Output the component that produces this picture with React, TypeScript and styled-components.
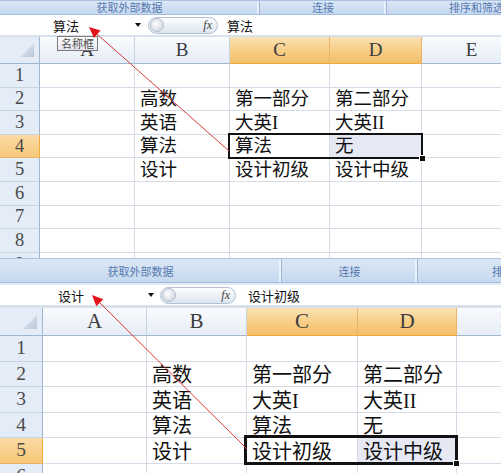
import { Fragment } from "react";
import styled, { createGlobalStyle } from "styled-components";

const GlobalStyle = createGlobalStyle`
  html, body {
    margin: 0;
    padding: 0;
    background: #ffffff;
  }
  body {
    font-family: "Liberation Serif", "Noto Sans CJK SC", serif;
  }
`;

type RibbonGroup = { label: string; width: number };
type Pointer = { tip: [number, number]; tail: [number, number] };

type SheetSpec = {
    height: number;
    ribbonH: number;
    ribbonAlign: "flex-end" | "center";
    groups: RibbonGroup[];
    barTop: number;
    barBottom: number;
    nameW: number;
    namePad: number;
    nameText: string;
    pillW: number;
    pillGap: number;
    formulaPad: number;
    formula: string;
    cols: number[];
    headerH: number;
    rowH: number;
    rowCount: number;
    cellFont: number;
    headFont: number;
    numFont: number;
    cellShift: number;
    activeRow: number;
    frame: number;
    pointer: Pointer;
    tooltip?: boolean;
};

const letters = ["A", "B", "C", "D", "E"];

const cells: Record<number, string[]> = {
    2: ["", "高数", "第一部分", "第二部分", ""],
    3: ["", "英语", "大英I", "大英II", ""],
    4: ["", "算法", "算法", "无", ""],
    5: ["", "设计", "设计初级", "设计中级", ""],
};

const sheets: SheetSpec[] = [
    {
        height: 258,
        ribbonH: 15,
        ribbonAlign: "flex-end",
        groups: [
            {label: "获取外部数据", width: 260},
            {label: "连接", width: 127},
            {label: "排序和筛选", width: 180},
        ],
        barTop: 0,
        barBottom: 2,
        nameW: 145,
        namePad: 53,
        nameText: "算法",
        pillW: 70,
        pillGap: 3,
        formulaPad: 9,
        formula: "算法",
        cols: [40, 95, 95, 100, 92, 100],
        headerH: 27,
        rowH: 23.6,
        rowCount: 9,
        cellFont: 18.5,
        headFont: 19,
        numFont: 18.5,
        cellShift: 1,
        activeRow: 4,
        frame: 2,
        pointer: {tip: [89, 27], tail: [229, 151]},
        tooltip: true,
    },
    {
        height: 215,
        ribbonH: 25,
        ribbonAlign: "center",
        groups: [
            {label: "获取外部数据", width: 282},
            {label: "连接", width: 136},
            {label: "排序和筛选", width: 204},
        ],
        barTop: 2,
        barBottom: 3,
        nameW: 158,
        namePad: 58,
        nameText: "设计",
        pillW: 76,
        pillGap: 2,
        formulaPad: 12,
        formula: "设计初级",
        cols: [43, 104, 100, 111, 99, 100],
        headerH: 28,
        rowH: 25.5,
        rowCount: 6,
        cellFont: 20,
        headFont: 21,
        numFont: 19.5,
        cellShift: 3,
        activeRow: 5,
        frame: 3,
        pointer: {tip: [92, 37], tail: [247, 191]},
    },
];

const PointerArrow = ({tip, tail}: Pointer) => {
    const [tx, ty] = tip;
    const [sx, sy] = tail;
    const len = Math.hypot(tx - sx, ty - sy);
    const ux = (tx - sx) / len;
    const uy = (ty - sy) / len;
    const bx = tx - ux * 11;
    const by = ty - uy * 11;
    const px = -uy * 5;
    const py = ux * 5;

    return (
        <Overlay>
            <line x1={sx} y1={sy} x2={bx} y2={by} stroke="#d63a3a" strokeWidth={1}/>
            <polygon points={`${tx},${ty} ${bx + px},${by + py} ${bx - px},${by - py}`} fill="#e3141c"/>
        </Overlay>
    );
};

const Sheet = ({spec}: { spec: SheetSpec }) => {
    const rows = Array.from({length: spec.rowCount}, (_, i) => i + 1);

    return (
        <Panel $h={spec.height}>
            <Ribbon $h={spec.ribbonH}>
                {spec.groups.map((g) => (
                    <Group key={g.label} $w={g.width} $align={spec.ribbonAlign}>{g.label}</Group>
                ))}
            </Ribbon>

            <Bar $top={spec.barTop} $bottom={spec.barBottom}>
                <NameBox $w={spec.nameW} $pad={spec.namePad}>
                    {spec.nameText}
                    <Drop/>
                </NameBox>
                <Pill $w={spec.pillW} $gap={spec.pillGap}>
                    <Knob/>
                    <Fx>fx</Fx>
                </Pill>
                <Formula $pad={spec.formulaPad}>{spec.formula}</Formula>
            </Bar>

            <Grid $cols={spec.cols} $headerH={spec.headerH} $rowH={spec.rowH} $rows={spec.rowCount}>
                <Corner $r={1} $c={1}><CornerMark/></Corner>
                {letters.map((l, i) => (
                    <ColHead key={l} $r={1} $c={i + 2} $active={i === 2 || i === 3} $font={spec.headFont}>
                        {l}
                    </ColHead>
                ))}
                {rows.map((r) => (
                    <Fragment key={r}>
                        <RowHead $r={r + 1} $c={1} $active={r === spec.activeRow} $font={spec.numFont}>{r}</RowHead>
                        {letters.map((l, i) => (
                            <Cell
                                key={l}
                                $r={r + 1}
                                $c={i + 2}
                                $shade={r === spec.activeRow && i === 3}
                                $font={spec.cellFont}
                                $shift={spec.cellShift}
                            >
                                {cells[r]?.[i]}
                            </Cell>
                        ))}
                    </Fragment>
                ))}
                <Selection $r={spec.activeRow + 1} $w={spec.frame}>
                    <Handle/>
                </Selection>
            </Grid>

            {spec.tooltip && <Tip>名称框</Tip>}
            <PointerArrow tip={spec.pointer.tip} tail={spec.pointer.tail}/>
        </Panel>
    );
};

const App = () => {
    return (
        <>
            <GlobalStyle/>
            <Page>
                {sheets.map((s, i) => <Sheet key={i} spec={s}/>)}
            </Page>
        </>
    );
};

export default App;

const Page = styled.div`
    width: 501px;
    height: 473px;
    overflow: hidden;
    display: flex;
    flex-direction: column;
`

const Panel = styled.div<{ $h: number }>`
    position: relative;
    flex: 0 0 ${({$h}) => $h}px;
    overflow: hidden;
    display: flex;
    flex-direction: column;
`

const Ribbon = styled.div<{ $h: number }>`
    flex: 0 0 ${({$h}) => $h}px;
    box-sizing: border-box;
    display: flex;
    overflow: hidden;
    background: linear-gradient(#dbe7f5, #c6d9ef);
    border-top: 1px solid #aac3e2;
    border-bottom: 1px solid #a3bddf;
`

const Group = styled.div<{ $w: number; $align: string }>`
    flex: 0 0 ${({$w}) => $w}px;
    display: flex;
    justify-content: center;
    align-items: ${({$align}) => $align};
    padding-bottom: ${({$align}) => $align === "flex-end" ? "1px" : "0"};
    box-sizing: border-box;
    border-right: 1px solid #9db6d8;
    box-shadow: inset -2px 0 0 #e9f1fb;
    font-family: "Noto Sans CJK SC", sans-serif;
    font-size: 11px;
    line-height: 12px;
    color: #5579b0;
    white-space: nowrap;
`

const Bar = styled.div<{ $top: number; $bottom: number }>`
    flex: 0 0 20px;
    display: flex;
    align-items: center;
    background: #ffffff;
    border-top: ${({$top}) => $top}px solid #e1eaf5;
    border-bottom: ${({$bottom}) => $bottom}px solid #d8e0eb;
    font-family: "Noto Sans CJK SC", sans-serif;
    font-size: 13px;
    color: #111111;
`

const NameBox = styled.div<{ $w: number; $pad: number }>`
    flex: 0 0 ${({$w}) => $w}px;
    box-sizing: border-box;
    height: 100%;
    display: flex;
    align-items: center;
    padding-left: ${({$pad}) => $pad}px;
`

const Drop = styled.span`
    margin-left: auto;
    margin-right: 4px;
    width: 0;
    height: 0;
    border-left: 3px solid transparent;
    border-right: 3px solid transparent;
    border-top: 4px solid #111111;
`

const Pill = styled.div<{ $w: number; $gap: number }>`
    flex: 0 0 ${({$w}) => $w}px;
    box-sizing: border-box;
    height: 17px;
    margin-left: ${({$gap}) => $gap}px;
    display: flex;
    align-items: center;
    justify-content: space-between;
    padding: 0 5px 0 1px;
    border: 1px solid #b3c1d3;
    border-radius: 9px;
    background: linear-gradient(#fdfeff, #dde5ef);
`

const Knob = styled.span`
    width: 12px;
    height: 12px;
    border-radius: 50%;
    border: 1px solid #b4bfcc;
    background: radial-gradient(circle at 40% 40%, #ffffff, #c4cdd8);
`

const Fx = styled.span`
    font-family: "Liberation Serif", serif;
    font-style: italic;
    font-size: 12px;
    color: #3f3f3f;
`

const Formula = styled.div<{ $pad: number }>`
    flex: 1;
    padding-left: ${({$pad}) => $pad}px;
    white-space: nowrap;
`

const Grid = styled.div<{ $cols: number[]; $headerH: number; $rowH: number; $rows: number }>`
    display: grid;
    width: max-content;
    grid-template-columns: ${({$cols}) => $cols.map((c) => `${c}px`).join(" ")};
    grid-template-rows: ${({$headerH}) => $headerH}px repeat(${({$rows}) => $rows}, ${({$rowH}) => $rowH}px);
`

const Placed = styled.div<{ $r: number; $c: number }>`
    grid-row: ${({$r}) => $r};
    grid-column: ${({$c}) => $c};
    box-sizing: border-box;
    min-width: 0;
    overflow: hidden;
`

const Corner = styled(Placed)`
    display: flex;
    align-items: flex-end;
    justify-content: flex-end;
    padding: 0 5px 6px 0;
    background: #e4ecf7;
    border-right: 1px solid #9eb6ce;
    border-bottom: 1px solid #9eb6ce;
`

const CornerMark = styled.span`
    width: 14px;
    height: 14px;
    background: linear-gradient(135deg, #e8eef6, #b9c6d7);
    clip-path: polygon(100% 0, 100% 100%, 0 100%);
`

const ColHead = styled(Placed)<{ $active: boolean; $font: number }>`
    display: flex;
    align-items: center;
    justify-content: center;
    font-size: ${({$font}) => $font}px;
    color: #3c3c3c;
    background: ${({$active}) => $active
            ? "linear-gradient(#fbe2b4, #f7cd84 55%, #f4c06a)"
            : "linear-gradient(#f9fbfd, #e6edf7)"};
    border-right: 1px solid ${({$active}) => $active ? "#e7b469" : "#c6d3e3"};
    border-bottom: 1px solid ${({$active}) => $active ? "#f2a93f" : "#9eb6ce"};
`

const RowHead = styled(Placed)<{ $active: boolean; $font: number }>`
    display: flex;
    align-items: center;
    justify-content: center;
    font-size: ${({$font}) => $font}px;
    color: #4a4a4a;
    background: ${({$active}) => $active
            ? "linear-gradient(#fbdba6, #f6c777)"
            : "#e4ecf7"};
    border-right: 1px solid ${({$active}) => $active ? "#f2a93f" : "#9eb6ce"};
    border-bottom: 1px solid ${({$active}) => $active ? "#e7b469" : "#c6d3e3"};
`

const Cell = styled(Placed)<{ $shade: boolean; $font: number; $shift: number }>`
    display: flex;
    align-items: center;
    padding: ${({$shift}) => $shift}px 0 0 5px;
    font-size: ${({$font}) => $font}px;
    line-height: 1;
    color: #111111;
    white-space: nowrap;
    background: ${({$shade}) => $shade ? "#e6e9f3" : "#ffffff"};
    border-right: 1px solid #d5dce8;
    border-bottom: 1px solid #d5dce8;
`

const Selection = styled.div<{ $r: number; $w: number }>`
    grid-row: ${({$r}) => $r};
    grid-column: 4 / span 2;
    position: relative;
    z-index: 2;
    margin: -${({$w}) => $w}px -1px -1px -${({$w}) => $w}px;
    border: ${({$w}) => $w}px solid #111111;
    pointer-events: none;
`

const Handle = styled.span`
    position: absolute;
    right: -5px;
    bottom: -5px;
    width: 5px;
    height: 5px;
    background: #111111;
    border: 1px solid #ffffff;
`

const Tip = styled.div`
    position: absolute;
    left: 57px;
    top: 36px;
    z-index: 4;
    padding: 0 3px;
    border: 1px solid #7a7a7a;
    background: linear-gradient(#ffffff, #e4e5ef);
    font-family: "Noto Sans CJK SC", sans-serif;
    font-size: 11px;
    line-height: 13px;
    color: #4c4c4c;
`

const Overlay = styled.svg`
    position: absolute;
    top: 0;
    left: 0;
    width: 100%;
    height: 100%;
    z-index: 5;
    pointer-events: none;
`
